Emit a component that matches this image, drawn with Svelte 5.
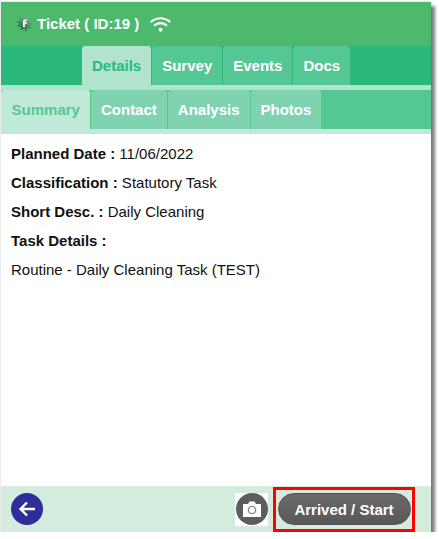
<script>
  const mainTabs = ['Details', 'Survey', 'Events', 'Docs'];
  const subTabs = ['Summary', 'Contact', 'Analysis', 'Photos'];
  const fields = [
    { label: 'Planned Date :', value: '11/06/2022' },
    { label: 'Classification :', value: 'Statutory Task' },
    { label: 'Short Desc. :', value: 'Daily Cleaning' },
    { label: 'Task Details :', value: '' }
  ];
</script>

<div class="screen">
  <header class="title">
    <svg class="logo" viewBox="0 0 16 16" aria-hidden="true">
      <defs>
        <linearGradient id="gear" x1="0.800" y1="0" x2="0.200" y2="1">
          <stop offset="0" stop-color="#6fb986" />
          <stop offset="1" stop-color="#2f6f43" />
        </linearGradient>
      </defs>
      <circle cx="8" cy="8" r="6" fill="url(#gear)" />
      <circle cx="8" cy="8" r="6.800" fill="none" stroke="url(#gear)" stroke-width="2" stroke-dasharray="2.100 2.170" />
      <path d="M6 12V6.700C6 5.200 7 4.500 8.300 4.500h1.700v1.500H8.700c-.6 0-.8.300-.8.800v.4h2v1.500h-2V12z" fill="#fff" />
    </svg>
    <span class="title-text">Ticket ( ID:19 )</span>
    <svg class="wifi" viewBox="0 0 22 16" aria-hidden="true">
      <path d="M1.500 5.500C6.800.8 15.200.8 20.500 5.500M5 9.200c3.400-2.800 8.600-2.800 12 0" fill="none" stroke="#fff" stroke-width="2.200" stroke-linecap="round" />
      <circle cx="11" cy="14" r="2" fill="#fff" />
    </svg>
  </header>

  <nav class="tabs main">
    {#each mainTabs as tab, i}
      <div class="tab" class:active={i === 0}>{tab}</div>
    {/each}
  </nav>

  <nav class="tabs sub">
    {#each subTabs as tab, i}
      <div class="tab" class:active={i === 0}>{tab}</div>
    {/each}
  </nav>

  <main class="content">
    {#each fields as field}
      <p><b>{field.label}</b> {field.value}</p>
    {/each}
    <p>Routine - Daily Cleaning Task (TEST)</p>
  </main>

  <footer class="actions">
    <button class="back" type="button" aria-label="Back">
      <svg viewBox="0 0 20 20" width="20" height="20" aria-hidden="true">
        <path d="M18 10H4M10 3.500L3.500 10l6.500 6.500" fill="none" stroke="#fff" stroke-width="2.400" />
      </svg>
    </button>
    <div class="spacer"></div>
    <div class="camera-box">
      <div class="camera">
        <svg viewBox="0 0 20 18" width="20" height="18" aria-hidden="true">
          <path d="M1 4h5l1.500-2.500h5L14 4h5v13H1z" fill="#fff" />
          <circle cx="10" cy="10" r="3.600" fill="none" stroke="#7d8a92" stroke-width="1.400" />
        </svg>
      </div>
    </div>
    <div class="highlight">
      <button class="start" type="button">Arrived / Start</button>
    </div>
  </footer>
</div>

<style>
  :global(body) {
    margin: 0;
    background: #fff;
  }

  .screen {
    width: 430px;
    height: 530px;
    margin: 2px 0 0 1px;
    display: flex;
    flex-direction: column;
    background: #fff;
    font-family: "Liberation Sans", Arial, sans-serif;
    box-shadow:
      4px 4px 3px rgba(60, 60, 60, 0.65),
      0 0 2px rgba(0, 0, 0, 0.25);
  }

  .title {
    height: 44px;
    flex: none;
    display: flex;
    align-items: center;
    padding-left: 16px;
    background: #4cb96c;
    color: #fff;
    font-size: 15px;
    font-weight: 700;
  }

  .logo {
    width: 16px;
    height: 16px;
    margin-right: 4px;
    margin-top: -3px;
  }

  .wifi {
    width: 21px;
    height: 16px;
    margin-left: 11px;
    margin-top: -1px;
  }

  .title-text {
    margin-top: -1px;
  }

  .tabs {
    display: flex;
    height: 39px;
    flex: none;
  }

  .tab {
    display: flex;
    align-items: center;
    justify-content: center;
    height: 39px;
    box-sizing: border-box;
    margin-right: 1px;
    border-radius: 3px 3px 0 0;
    color: #fff;
    font-size: 15px;
    font-weight: 700;
  }

  .main {
    padding-left: 81px;
    background: #2bb97b;
    border-bottom: 5px solid #b0e4cc;
  }

  .main .tab {
    padding: 0 10px;
    background: #55c795;
  }

  .main .tab.active {
    background: #b0e4cc;
    color: #2bb97b;
  }

  .sub {
    background: #55c795;
    border-bottom: 5px solid #c0e9d7;
  }

  .sub .tab {
    padding: 0 10px;
    background: #80d3af;
  }

  .sub .tab.active {
    padding-left: 10.600px;
    background: #c0e9d7;
    color: #55c795;
  }

  .content {
    flex: 1;
    padding: 5px 10px 0;
    color: #111;
    font-size: 15px;
  }

  .content p {
    margin: 0;
    height: 29px;
    line-height: 29px;
  }

  .actions {
    height: 46px;
    flex: none;
    display: flex;
    align-items: center;
    padding: 0 16px 0 10px;
    background: #d3ecdd;
  }

  .back {
    display: flex;
    align-items: center;
    justify-content: center;
    width: 32px;
    height: 32px;
    padding: 0;
    border: none;
    border-radius: 50%;
    background: #2e2d99;
  }

  .spacer {
    flex: 1;
  }

  .camera-box {
    width: 33px;
    height: 33px;
    display: flex;
    align-items: center;
    justify-content: center;
    background: #fff;
    margin-right: 5px;
  }

  .camera {
    width: 32px;
    height: 32px;
    display: flex;
    align-items: center;
    justify-content: center;
    border-radius: 50%;
    background: #5d5d5d;
  }

  .highlight {
    box-sizing: border-box;
    width: 142px;
    height: 45px;
    display: flex;
    align-items: center;
    justify-content: center;
    border: 3px solid #f00;
  }

  .start {
    width: 133px;
    height: 32px;
    padding: 0;
    border: 1px solid #555;
    border-radius: 16px;
    background: linear-gradient(#6a6a6a, #585858);
    color: #fff;
    font-family: inherit;
    font-size: 15px;
    font-weight: 700;
  }
</style>
